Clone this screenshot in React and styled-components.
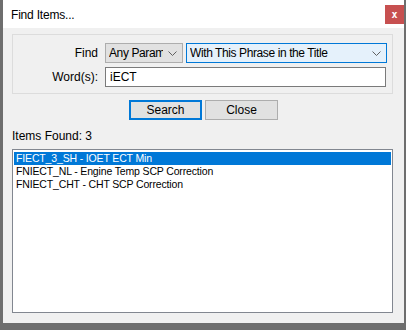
import React from 'react';
import styled, { createGlobalStyle } from 'styled-components';

const GlobalStyle = createGlobalStyle`
  html, body {
    margin: 0;
    padding: 0;
    background: #6e6e6e;
  }
  body {
    font-family: "Liberation Sans", Arial, sans-serif;
    font-size: 12px;
    color: #000;
  }
`;

const Screen = styled.div`
  width: 406px;
  height: 330px;
  padding-left: 3px;
  box-sizing: border-box;
`;

const Window = styled.div`
  width: 401px;
  height: 323px;
  background: #f0f0f0;
  display: flex;
  flex-direction: column;
`;

const TitleBar = styled.div`
  height: 28px;
  background: #fff;
  display: flex;
  align-items: flex-start;
  justify-content: space-between;
`;

const Title = styled.div`
  padding: 8px 0 0 8px;
  font-size: 12px;
  line-height: 14px;
  letter-spacing: -0.2px;
`;

const CloseX = styled.div`
  width: 19px;
  height: 19px;
  margin-top: 5px;
  background: #c75050;
  color: #fff;
  font: bold 10px "DejaVu Sans Mono", monospace;
  display: flex;
  align-items: center;
  justify-content: center;
`;

const Body = styled.div`
  flex: 1;
  display: flex;
  flex-direction: column;
  padding: 6px 11px 10px 9px;
`;

const Group = styled.div`
  border: 1px solid #dcdcdc;
  padding: 8px 5px 6px 0;
  display: grid;
  grid-template-columns: 85px 282px;
  column-gap: 7px;
  row-gap: 4px;
  align-items: center;
`;

const Label = styled.div`
  text-align: right;
  line-height: 20px;
`;

const Controls = styled.div`
  display: flex;
  gap: 3px;
`;

const Select = styled.div`
  box-sizing: border-box;
  height: 20px;
  width: ${(p) => p.width}px;
  border: 1px solid ${(p) => (p.focused ? '#0078d7' : '#adadad')};
  background: ${(p) => (p.focused ? '#e5f1fb' : '#e1e1e1')};
  display: flex;
  align-items: center;
  padding: 0 5px 0 3px;
  gap: 5px;
`;

const SelectText = styled.span`
  flex: 1;
  overflow: hidden;
  white-space: nowrap;
  line-height: 18px;
  letter-spacing: -0.4px;
`;

const TextBox = styled.div`
  box-sizing: border-box;
  height: 20px;
  width: 281px;
  border: 1px solid #7a7a7a;
  background: #fff;
  padding: 0 4px;
  line-height: 18px;
`;

const ButtonRow = styled.div`
  display: flex;
  justify-content: center;
  gap: 3px;
  margin-top: 6px;
  padding-left: 2px;
`;

const Button = styled.div`
  box-sizing: border-box;
  width: 73px;
  height: 20px;
  background: #e1e1e1;
  border: ${(p) => (p.primary ? '2px solid #0078d7' : '1px solid #adadad')};
  display: flex;
  align-items: center;
  justify-content: center;
`;

const Found = styled.div`
  margin-top: 9px;
  line-height: 15px;
`;

const List = styled.div`
  margin-top: 5px;
  flex: 1;
  border: 1px solid #828790;
  background: #fff;
  padding: 2px 1px;
`;

const Row = styled.div`
  height: 13px;
  line-height: 13px;
  padding-left: 2px;
  font-size: 10.5px;
  letter-spacing: -0.15px;
  white-space: nowrap;
  background: ${(p) => (p.selected ? '#0078d7' : 'transparent')};
  color: ${(p) => (p.selected ? '#fff' : '#000')};
`;

const Chevron = () => (
  <svg width="9" height="5" viewBox="0 0 9 5">
    <path d="M0.5 0.5 L4.5 4.5 L8.5 0.5" fill="none" stroke="#606060" strokeWidth="1" />
  </svg>
);

const items = [
  'FIECT_3_SH - IOET ECT Min',
  'FNIECT_NL - Engine Temp SCP Correction',
  'FNIECT_CHT - CHT SCP Correction',
];

export default function App() {
  return (
    <Screen>
      <GlobalStyle />
      <Window>
        <TitleBar>
          <Title>Find Items...</Title>
          <CloseX>x</CloseX>
        </TitleBar>
        <Body>
          <Group>
            <Label>Find</Label>
            <Controls>
              <Select width={78}>
                <SelectText>Any Parameter</SelectText>
                <Chevron />
              </Select>
              <Select width={201} focused>
                <SelectText>With This Phrase in the Title</SelectText>
                <Chevron />
              </Select>
            </Controls>
            <Label>Word(s):</Label>
            <TextBox>iECT</TextBox>
          </Group>
          <ButtonRow>
            <Button primary>Search</Button>
            <Button>Close</Button>
          </ButtonRow>
          <Found>Items Found: 3</Found>
          <List>
            {items.map((item, i) => (
              <Row key={item} selected={i === 0}>{item}</Row>
            ))}
          </List>
        </Body>
      </Window>
    </Screen>
  );
}
